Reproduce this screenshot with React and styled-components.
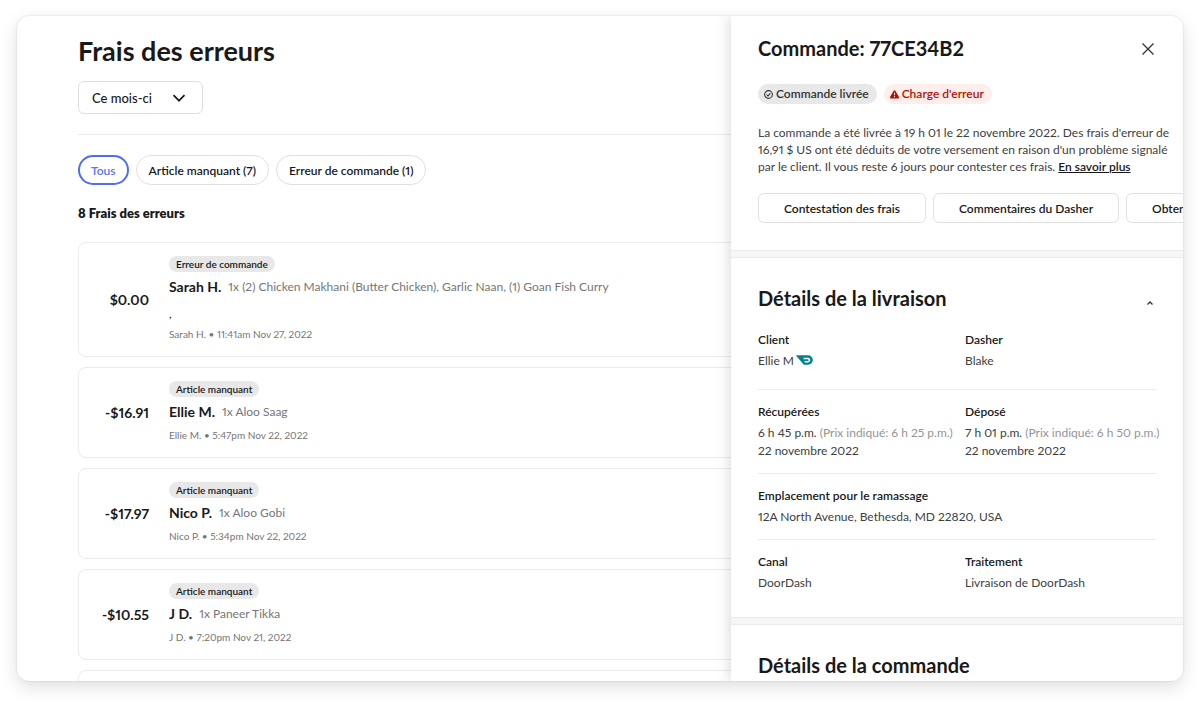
import React from 'react';
import styled, { createGlobalStyle } from 'styled-components';

const charges = [
  {
    amount: '$0.00',
    reason: 'Erreur de commande',
    name: 'Sarah H.',
    items: '1x (2) Chicken Makhani (Butter Chicken), Garlic Naan, (1) Goan Fish Curry',
    note: ',',
    date: '11:41am Nov 27, 2022',
  },
  { amount: '-$16.91', reason: 'Article manquant', name: 'Ellie M.', items: '1x Aloo Saag', date: '5:47pm Nov 22, 2022' },
  { amount: '-$17.97', reason: 'Article manquant', name: 'Nico P.', items: '1x Aloo Gobi', date: '5:34pm Nov 22, 2022' },
  { amount: '-$10.55', reason: 'Article manquant', name: 'J D.', items: '1x Paneer Tikka', date: '7:20pm Nov 21, 2022' },
];

const filters = ['Tous', 'Article manquant (7)', 'Erreur de commande (1)'];

const ChargeCard = ({ charge }) => (
  <Card>
    <Amount>{charge.amount}</Amount>
    <CardBody>
      <Tag>{charge.reason}</Tag>
      <Summary>
        <Customer>{charge.name}</Customer>
        <Items>{charge.items}</Items>
      </Summary>
      {charge.note && <Note>{charge.note}</Note>}
      <Meta>
        {charge.name} • {charge.date}
      </Meta>
    </CardBody>
  </Card>
);

const Detail = ({ label, children }) => (
  <div>
    <Term>{label}</Term>
    <Value>{children}</Value>
  </div>
);

const App = () => {
  const [active, setActive] = React.useState('Tous');

  return (
    <Page>
      <GlobalStyle />
      <Window>
        <Main>
          <Title>Frais des erreurs</Title>
          <Period>
            <Select aria-label="Période" defaultValue="month">
              <option value="month">Ce mois-ci</option>
            </Select>
            <Chevron viewBox="0 0 14 14" aria-hidden="true">
              <path d="M1.5 4.2l5.5 5.5 5.5-5.5" />
            </Chevron>
          </Period>
          <Filters>
            {filters.map((label) => (
              <Chip key={label} $active={label === active} onClick={() => setActive(label)}>
                {label}
              </Chip>
            ))}
          </Filters>
          <Count>8 Frais des erreurs</Count>
          <List>
            {charges.map((charge) => (
              <ChargeCard key={charge.name} charge={charge} />
            ))}
            <Card />
          </List>
        </Main>

        <Drawer>
          <Overview>
            <DrawerHeader>
              <DrawerTitle>Commande: 77CE34B2</DrawerTitle>
              <IconButton aria-label="Fermer">
                <svg width="14" height="14" viewBox="0 0 14 14" aria-hidden="true">
                  <path d="M1.5 1.5l11 11M12.5 1.5l-11 11" />
                </svg>
              </IconButton>
            </DrawerHeader>
            <Badges>
              <Badge>
                <svg width="9" height="9" viewBox="0 0 16 16" fill="none" stroke="currentColor" strokeWidth="1.9" aria-hidden="true">
                  <circle cx="8" cy="8" r="6.9" />
                  <path d="M4.8 8.2l2.4 2.3 4-4.6" />
                </svg>
                Commande livrée
              </Badge>
              <Badge $error>
                <svg width="9" height="9" viewBox="0 0 16 16" aria-hidden="true">
                  <path fill="currentColor" d="M6.3 1.6a2 2 0 0 1 3.4 0l6 10.6a2 2 0 0 1-1.7 3H2a2 2 0 0 1-1.7-3z" />
                  <path stroke="#ffeeeb" strokeWidth="1.8" d="M8 5v4.4M8 10.8v2" />
                </svg>
                Charge d'erreur
              </Badge>
            </Badges>
            <Description>
              La commande a été livrée à 19 h 01 le 22 novembre 2022. Des frais d'erreur de 16,91 $ US ont été déduits de
              votre versement en raison d'un problème signalé par le client. Il vous reste 6 jours pour contester ces
              frais. <a href="#plus">En savoir plus</a>
            </Description>
            <Actions>
              <Action>Contestation des frais</Action>
              <Action>Commentaires du Dasher</Action>
              <Action>Obtenir de l'aide</Action>
            </Actions>
          </Overview>

          <Section>
            <SectionHeader>
              <DrawerTitle>Détails de la livraison</DrawerTitle>
              <IconButton aria-label="Réduire" $small>
                <svg width="6" height="4" viewBox="0 0 6 4" aria-hidden="true">
                  <path d="M0.5 3.5L3 1l2.5 2.5" />
                </svg>
              </IconButton>
            </SectionHeader>
            <Row $tall>
              <Detail label="Client">
                Ellie M
                <DashMark viewBox="0 0 17 10" aria-hidden="true">
                  <path fill="#00838a" d="M0.5 0.3h11.6a4.7 4.7 0 0 1 0 9.4H8.6a1.6 1.6 0 0 1-1.2-.5L0.3 0.9a.4.4 0 0 1 .2-.6z" />
                  <path fill="none" stroke="#fff" strokeWidth="1.5" d="M7.6 3.4h4.2a1.6 1.6 0 0 1 0 3.3H8.6" />
                </DashMark>
              </Detail>
              <Detail label="Dasher">Blake</Detail>
            </Row>
            <Row>
              <Detail label="Récupérées">
                6 h 45 p.m. <Muted>(Prix indiqué: 6 h 25 p.m.)</Muted>
                <br />
                22 novembre 2022
              </Detail>
              <Detail label="Déposé">
                7 h 01 p.m. <Muted>(Prix indiqué: 6 h 50 p.m.)</Muted>
                <br />
                22 novembre 2022
              </Detail>
            </Row>
            <Row>
              <Detail label="Emplacement pour le ramassage">12A North Avenue, Bethesda, MD 22820, USA</Detail>
            </Row>
            <Row>
              <Detail label="Canal">DoorDash</Detail>
              <Detail label="Traitement">Livraison de DoorDash</Detail>
            </Row>
          </Section>

          <Section>
            <DrawerTitle>Détails de la commande</DrawerTitle>
          </Section>
        </Drawer>
      </Window>
    </Page>
  );
};

export default App;

const GlobalStyle = createGlobalStyle`
  *,
  *::before {
    box-sizing: border-box;
  }

  body {
    margin: 0;
    background: #fff;
    color: #191919;
    font-family: Lato, 'Liberation Sans', sans-serif;
    font-size: 12px;
    font-variant-numeric: proportional-nums;
  }

  button,
  select {
    font: inherit;
    color: inherit;
    cursor: pointer;
  }
`;

const Page = styled.div`
  display: flex;
  height: 100vh;
  padding: 16px 17px 30px;
`;

const Window = styled.div`
  position: relative;
  flex: 1;
  overflow: hidden;
  border-radius: 12px;
  background: #fff;
  box-shadow: 0 0 2px rgba(0, 0, 0, 0.16), 0 6px 18px rgba(0, 0, 0, 0.13);
`;

const Main = styled.main`
  padding: 19px 61px 0;
`;

const Title = styled.h1`
  margin: 0 0 14px;
  font-size: 27px;
  line-height: 32px;
`;

const Period = styled.div`
  display: grid;
  align-items: center;
  justify-content: start;
  padding-bottom: 20px;
  border-bottom: 1px solid #ebebeb;
`;

const Select = styled.select`
  grid-area: 1 / 1;
  width: 125px;
  height: 33px;
  padding: 0 13px;
  border: 1px solid #dedede;
  border-radius: 6px;
  background: #fff;
  font-size: 13px;
  font-weight: 500;
  appearance: none;
`;

const Chevron = styled.svg`
  grid-area: 1 / 1;
  justify-self: end;
  width: 14px;
  margin-right: 17px;
  fill: none;
  stroke: #191919;
  stroke-width: 1.7;
  pointer-events: none;
`;

const Filters = styled.div`
  display: flex;
  gap: 7px;
  margin: 20px 0;
`;

const Chip = styled.button`
  height: 30px;
  padding: 0 ${({ $active }) => ($active ? '11px' : '12px')};
  border: ${({ $active }) => ($active ? '2px solid #4c6ef5' : '1px solid #e0e0e0')};
  border-radius: 15px;
  background: #fff;
  color: ${({ $active }) => ($active ? '#5a78f0' : '#191919')};
  font-weight: 600;
`;

const Count = styled.h2`
  margin: 0 0 20px;
  font-size: 13px;
  font-weight: 800;
  line-height: 17px;
`;

const List = styled.div`
  display: grid;
  gap: 10px;
`;

const Card = styled.article`
  display: flex;
  align-items: center;
  gap: 20px;
  min-height: 91px;
  padding: 13px 20px 14px;
  border: 1px solid #ebebeb;
  border-radius: 8px;
`;

const Amount = styled.div`
  width: 50px;
  font-size: 14px;
  font-weight: 700;
  text-align: right;
  white-space: nowrap;
`;

const CardBody = styled.div`
  display: flex;
  flex-direction: column;
  align-items: flex-start;
`;

const Tag = styled.span`
  padding: 0 7px;
  border-radius: 8px;
  background: #e8e8e8;
  font-size: 10px;
  font-weight: 600;
  line-height: 16px;
`;

const Summary = styled.div`
  display: flex;
  gap: 7px;
  margin: 5px 0;
  line-height: 20px;
`;

const Customer = styled.span`
  font-size: 14px;
  font-weight: 700;
`;

const Items = styled.span`
  color: #767676;
`;

const Note = styled.div`
  line-height: 24px;
`;

const Meta = styled.div`
  color: #767676;
  font-size: 10px;
  line-height: 16px;
`;

const Drawer = styled.aside`
  position: absolute;
  top: 0;
  right: 0;
  bottom: 0;
  width: 452px;
  overflow: hidden;
  background: #fff;
  box-shadow: 0 0 14px rgba(0, 0, 0, 0.18);
`;

const Overview = styled.section`
  padding: 20px 27px 27px;
`;

const DrawerHeader = styled.header`
  display: flex;
  align-items: center;
  justify-content: space-between;
`;

const DrawerTitle = styled.h2`
  margin: 0;
  font-size: 20px;
  line-height: 25px;
`;

const IconButton = styled.button`
  display: grid;
  place-items: center;
  width: ${({ $small }) => ($small ? '12px' : '16px')};
  height: 16px;
  padding: 0;
  border: 0;
  background: none;

  path {
    fill: none;
    stroke: #333;
    stroke-width: 1.3;
  }
`;

const Badges = styled.div`
  display: flex;
  gap: 7px;
  margin: 23px 0 20px;
`;

const Badge = styled.span`
  display: inline-flex;
  align-items: center;
  gap: 3px;
  padding: 0 8px 0 6px;
  border-radius: 10px;
  background: ${({ $error }) => ($error ? '#ffeeeb' : '#e8e8e8')};
  color: ${({ $error }) => ($error ? '#b71000' : '#333')};
  font-weight: 600;
  line-height: 20px;
`;

const Description = styled.p`
  margin: 0 -20px 18px 0;
  color: #404040;
  line-height: 17px;

  a {
    color: #191919;
    font-weight: 600;
  }
`;

const Actions = styled.div`
  display: flex;
  gap: 7px;
`;

const Action = styled.button`
  flex: none;
  height: 30px;
  padding: 0 25px;
  border: 1px solid #e0e0e0;
  border-radius: 6px;
  background: #fff;
  font-weight: 600;
`;

const Section = styled.section`
  padding: 28px 27px 12px;

  &::before {
    content: '';
    display: block;
    height: 8px;
    margin: -28px -27px 28px;
    border: solid #ebebeb;
    border-width: 1px 0;
    background: #f6f6f6;
  }
`;

const SectionHeader = styled.header`
  display: flex;
  align-items: flex-end;
  justify-content: space-between;
  margin-bottom: 7px;
`;

const Row = styled.div`
  display: grid;
  grid-template-columns: repeat(2, minmax(0, 1fr));
  gap: 16px;
  padding: 13px 0 ${({ $tall }) => ($tall ? '19px' : '13px')};
  white-space: nowrap;

  & + & {
    border-top: 1px solid #ebebeb;
  }
`;

const Term = styled.div`
  margin-bottom: 3px;
  color: #191919;
  font-weight: 600;
  line-height: 18px;
`;

const Value = styled.div`
  color: #404040;
  line-height: 18px;
`;

const Muted = styled.span`
  color: #949494;
`;

const DashMark = styled.svg`
  width: 17px;
  height: 10px;
  margin-left: 2px;
`;
